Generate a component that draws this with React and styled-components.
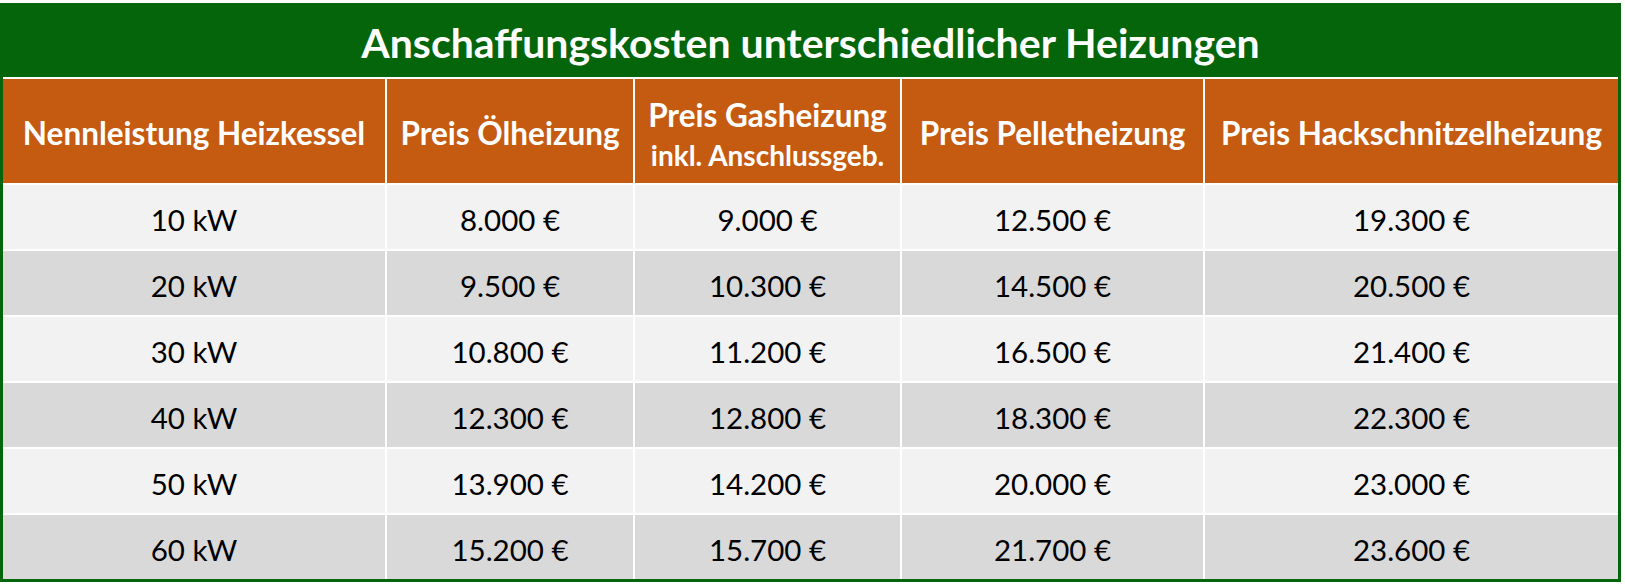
import React from 'react';
import styled, { createGlobalStyle } from 'styled-components';

const GlobalStyle = createGlobalStyle`
  body {
    margin: 0;
    background: #ffffff;
    font-family: Lato, "Open Sans", sans-serif;
  }
`;

const Frame = styled.div`
  width: 1615px;
  margin-top: 3px;
  border: 3px solid #05650a;
  border-top: none;
  background: #ffffff;
`;

const Title = styled.h1`
  margin: 0;
  box-sizing: border-box;
  height: 74px;
  padding-top: 4px;
  display: flex;
  align-items: center;
  justify-content: center;
  background: #05650a;
  color: #ffffff;
  font-size: 41px;
  font-weight: 700;
`;

const Grid = styled.div`
  display: grid;
  grid-template-columns: 382px 246px 265px 301px 1fr;
  grid-template-rows: 104px repeat(6, 64px);
  gap: 2px;
  padding-top: 2px;
  background: #ffffff;
`;

const HeadCell = styled.div`
  padding-top: 6px;
  display: flex;
  flex-direction: column;
  align-items: center;
  justify-content: center;
  background: #c55a11;
  color: #ffffff;
  font-size: 31.5px;
  font-weight: 700;
  line-height: 1.2;
  text-align: center;
`;

const SubLabel = styled.span`
  font-size: 28px;
  line-height: 1.1;
  margin-top: 5px;
`;

const Cell = styled.div`
  padding-top: 4px;
  display: flex;
  align-items: center;
  justify-content: center;
  background: ${({ $shade }) => ($shade ? '#d9d9d9' : '#f2f2f2')};
  color: #000000;
  font-size: 29.5px;
`;

const rows = [
  ['10 kW', '8.000 €', '9.000 €', '12.500 €', '19.300 €'],
  ['20 kW', '9.500 €', '10.300 €', '14.500 €', '20.500 €'],
  ['30 kW', '10.800 €', '11.200 €', '16.500 €', '21.400 €'],
  ['40 kW', '12.300 €', '12.800 €', '18.300 €', '22.300 €'],
  ['50 kW', '13.900 €', '14.200 €', '20.000 €', '23.000 €'],
  ['60 kW', '15.200 €', '15.700 €', '21.700 €', '23.600 €'],
];

const App = () => (
  <>
    <GlobalStyle />
    <Frame>
      <Title>Anschaffungskosten unterschiedlicher Heizungen</Title>
      <Grid>
        <HeadCell>Nennleistung Heizkessel</HeadCell>
        <HeadCell>Preis Ölheizung</HeadCell>
        <HeadCell>
          Preis Gasheizung
          <SubLabel>inkl. Anschlussgeb.</SubLabel>
        </HeadCell>
        <HeadCell>Preis Pelletheizung</HeadCell>
        <HeadCell>Preis Hackschnitzelheizung</HeadCell>
        {rows.map((row, i) =>
          row.map((value, j) => (
            <Cell key={`${i}-${j}`} $shade={i % 2 === 1}>
              {value}
            </Cell>
          ))
        )}
      </Grid>
    </Frame>
  </>
);

export default App;
